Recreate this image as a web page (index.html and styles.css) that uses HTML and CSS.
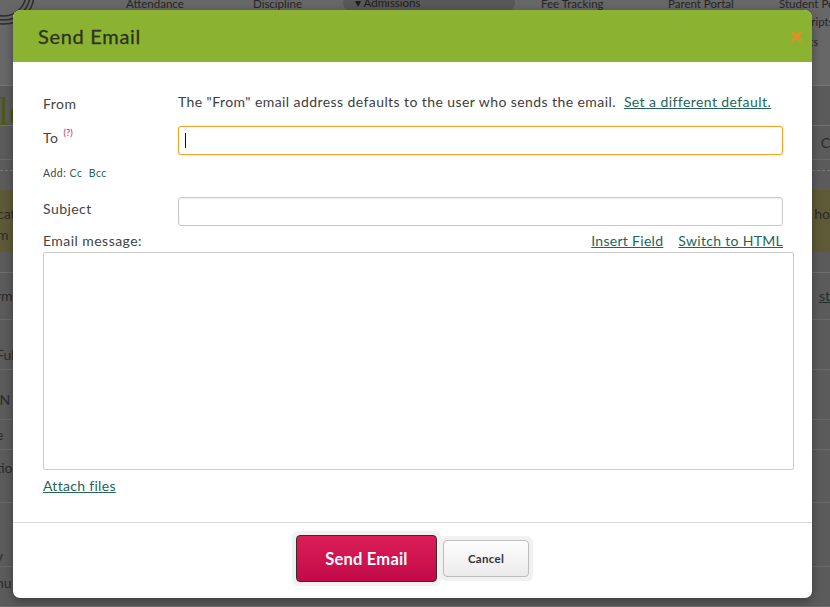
FILE: index.html
```html
<!DOCTYPE html>
<html>
<head>
<meta charset="utf-8">
<title>Send Email</title>
<link rel="stylesheet" href="styles.css">
</head>
<body>
<div class="page">
  <div class="top">
    <div class="logo">
      <svg width="40" height="36" viewBox="0 0 40 36"><g fill="none" stroke="#2e2e2e" stroke-width="1.6"><circle cx="4" cy="-6" r="22"/><circle cx="4" cy="-6" r="26"/><circle cx="4" cy="-6" r="30"/></g></svg>
    </div>
    <div class="navwrap">
      <div class="nav">
        <span class="ni n1">Attendance</span>
        <span class="ni n2">Discipline</span>
        <span class="ni pill">&#9662; Admissions</span>
        <span class="ni n4">Fee Tracking</span>
        <span class="ni n5">Parent Portal</span>
        <span class="ni n6">Student Portal</span>
      </div>
      <div class="sub">
        <span>Transcripts</span>
        <span>Reports</span>
      </div>
    </div>
  </div>
  <div class="row r1"><span class="big">le</span><span></span></div>
  <div class="row r2"><span></span><span class="rt">Co</span></div>
  <div class="row r3"><span></span><span></span></div>
  <div class="row r3b"><span></span><span></span></div>
  <div class="row r4"><span class="lt">cat<br>m</span><span class="rt">hoo</span></div>
  <div class="row r5"><span></span><span></span></div>
  <div class="row r6"><span class="lt">rm</span><span class="rt link">sto</span></div>
  <div class="row r7"><span class="lt">Ful</span><span></span></div>
  <div class="row r8"><span class="lt">&nbsp;N</span><span></span></div>
  <div class="row r9"><span class="lt">e</span><span></span></div>
  <div class="row r10"><span class="lt">tio</span><span></span></div>
  <div class="row r11"><span class="lt">y</span><span></span></div>
  <div class="row r12"><span class="lt">nu</span><span></span></div>
</div>

<div class="modal">
  <div class="mhead">
    <h1>Send Email</h1>
    <svg class="close" width="11" height="11" viewBox="0 0 11 11"><path d="M1.5 1.5 L9.5 9.5 M9.5 1.5 L1.5 9.5" stroke="#ec8a2a" stroke-width="2.6" stroke-linecap="square"/></svg>
  </div>
  <div class="mbody">
    <div class="frow from">
      <div class="lbl">From</div>
      <div class="desc">The "From" email address defaults to the user who sends the email.&nbsp; <a href="#">Set a different default.</a></div>
    </div>
    <div class="frow to">
      <div class="lbl lbl-in">To <sup class="req">(?)</sup></div>
      <div class="field focus"><span class="caret"></span></div>
    </div>
    <div class="add">Add: <a href="#">Cc</a> <a class="bcc" href="#">Bcc</a></div>
    <div class="frow subj">
      <div class="lbl lbl-in">Subject</div>
      <div class="field"></div>
    </div>
    <div class="msghead">
      <span>Email message:</span>
      <span class="links"><a href="#">Insert Field</a><a href="#">Switch to HTML</a></span>
    </div>
    <div class="msg"></div>
    <a class="attach" href="#">Attach files</a>
  </div>
  <div class="mfoot">
    <span class="bw bw-send"><button class="btn send">Send Email</button></span>
    <span class="bw bw-cancel"><button class="btn cancel">Cancel</button></span>
  </div>
</div>
</body>
</html>
```

FILE: styles.css
```css
* { box-sizing: border-box; }
html, body { margin: 0; padding: 0; }
body {
  width: 830px;
  height: 607px;
  overflow: hidden;
  background: #585858;
  font-family: Lato, "Liberation Sans", sans-serif;
  position: relative;
}

/* ---------- dimmed page behind ---------- */
.page { width: 830px; height: 607px; overflow: hidden; background: #5b5b5b; color: #2c2c2c; }
.top {
  height: 86px;
  display: flex;
  background: #676767;
  border-bottom: 1px solid #747474;
}
.logo { width: 100px; flex: none; }
.logo svg { display: block; }
.navwrap { flex: 1; display: flex; flex-direction: column; }
.nav {
  display: flex;
  height: 16px;
  margin-top: -5px;
  align-items: center;
  font-size: 11.5px;
  color: #262626;
  white-space: nowrap;
}
.ni { flex: none; }
.n1 { margin-left: 26px; width: 127px; }
.n2 { width: 90px; }
.pill {
  width: 172px;
  padding-left: 12px;
  background: #585858;
  border-radius: 10px;
  line-height: 16px;
  color: #1c1c1c;
}
.n4 { margin-left: 26px; width: 127px; }
.n5 { width: 111px; }
.n6 { width: 80px; }
.sub {
  margin-left: 679px;
  margin-top: 4px;
  display: flex;
  flex-direction: column;
  gap: 6px;
  font-size: 11.5px;
  color: #262626;
  line-height: 14px;
  white-space: nowrap;
}

.row {
  display: flex;
  justify-content: space-between;
  border-bottom: 1px solid #6a6a6a;
  font-size: 14px;
  line-height: 17px;
  color: #2a2a2a;
  white-space: nowrap;
}
.row > span { display: block; }
.lt { margin-left: -4px; }
.rt { margin-right: -8px; }
.link { text-decoration: underline; color: #22302c; }
.r1 { height: 40px; border-bottom-color: #727272; }
.big { font-family: "Liberation Serif", serif; font-size: 40px; color: #4d5716; line-height: 40px; margin-left: -2px; margin-top: 6px; }
.r2 { height: 34px; align-items: center; }
.r3 { height: 11px; border-bottom: 1px dashed #777; }
.r3b { height: 19px; border-bottom: none; }
.r4 { height: 62px; background: #5e5a38; border-bottom: none; padding-top: 13px; line-height: 21px; }
.r4 .lt { margin-left: -3px; }
.r5 { height: 21px; border-bottom-color: #707070; }
.r6 { height: 47px; padding-top: 14px; }
.r7 { height: 50px; padding-top: 26px; }
.r8 { height: 50px; padding-top: 21px; }
.r9 { height: 30px; padding-top: 6px; }
.r10 { height: 53px; padding-top: 9px; }
.r11 { height: 64px; padding-top: 44px; }
.r12 { height: 40px; padding-top: 7px; }

/* ---------- modal ---------- */
.modal {
  position: absolute;
  left: 13px;
  top: 10px;
  width: 799px;
  background: #fff;
  border-radius: 8px 8px 7px 7px;
  box-shadow: 0 3px 10px rgba(0,0,0,0.35);
  color: #3d3d3d;
  letter-spacing: 0.45px;
}
.mhead {
  height: 52px;
  background: #8cb232;
  border-radius: 8px 8px 0 0;
  display: flex;
  align-items: center;
  justify-content: space-between;
  padding: 0 10px 0 25px;
}
.mhead h1 {
  margin: 0;
  font-size: 20px;
  font-weight: 400;
  color: #2d3320;
  letter-spacing: 0.7px;
  -webkit-text-stroke: 0.3px #2d3320;
}
.close { display: block; margin-top: 0; }

.mbody { padding: 32px 18px 0 30px; }
.frow { display: flex; }
.lbl { width: 135px; flex: none; font-size: 14px; line-height: 20px; color: #444; }
.lbl-in { padding-top: 2px; }
.desc { font-size: 14px; line-height: 20px; color: #3d3d3d; margin-top: -2px; white-space: nowrap; letter-spacing: 0.42px; }
a { color: #23655a; text-decoration: underline; }
.req {
  color: #e0213f;
  font-size: 9.5px;
  letter-spacing: 0;
  vertical-align: 0;
  position: relative;
  top: -7px;
  margin-left: 1px;
}
.to { margin-top: 12px; }
.field {
  width: 605px;
  height: 29px;
  border: 1px solid #c9c9c9;
  border-radius: 3px;
  box-shadow: inset 0 1px 2px rgba(0,0,0,0.08);
  background: #fff;
  display: flex;
  align-items: center;
  padding-left: 6px;
}
.field.focus { border-color: #f2a127; box-shadow: 0 0 2px rgba(242,161,39,0.4); }
.caret { display: block; width: 1px; height: 15px; background: #111; }
.add { margin-top: 11px; font-size: 10.5px; line-height: 14px; color: #444; letter-spacing: 0.5px; }
.add a { text-decoration: none; }
.add .bcc { margin-left: 3px; }
.subj { margin-top: 17px; }
.msghead {
  margin-top: 5px;
  display: flex;
  justify-content: space-between;
  font-size: 14px;
  line-height: 20px;
  color: #444;
  padding-right: 11px;
}
.links { display: flex; gap: 15px; letter-spacing: 0.3px; }
.msg {
  margin-top: 1px;
  width: 751px;
  height: 218px;
  border: 1px solid #cbcbcb;
  border-radius: 2px;
}
.attach { display: inline-block; margin-top: 6px; font-size: 14px; line-height: 20px; letter-spacing: 0.3px; }

.mfoot {
  margin-top: 26px;
  border-top: 1px solid #dcdcdc;
  padding: 8px 0 12px;
  display: flex;
  justify-content: center;
  align-items: center;
}
.bw { display: block; background: #f1f1f1; border-radius: 6px; }
.bw-send { padding: 4px; }
.bw-cancel { padding: 4px 4px 4px 3px; margin-left: -1px; }
.btn { display: block; font-family: Lato, "Liberation Sans", sans-serif; cursor: pointer; }
.send {
  width: 141px;
  height: 47px;
  border: 1px solid #3a2a30;
  border-radius: 4px;
  background: linear-gradient(#db1e58, #c20a49);
  color: #fff;
  font-size: 16.5px;
  font-weight: 700;
  letter-spacing: 0.2px;
}
.cancel {
  width: 86px;
  height: 37px;
  border: 1px solid #bdbdbd;
  border-radius: 4px;
  background: linear-gradient(#fdfdfd, #ebebeb);
  color: #333;
  font-size: 11.5px;
  font-weight: 700;
  letter-spacing: 0.3px;
}
```
